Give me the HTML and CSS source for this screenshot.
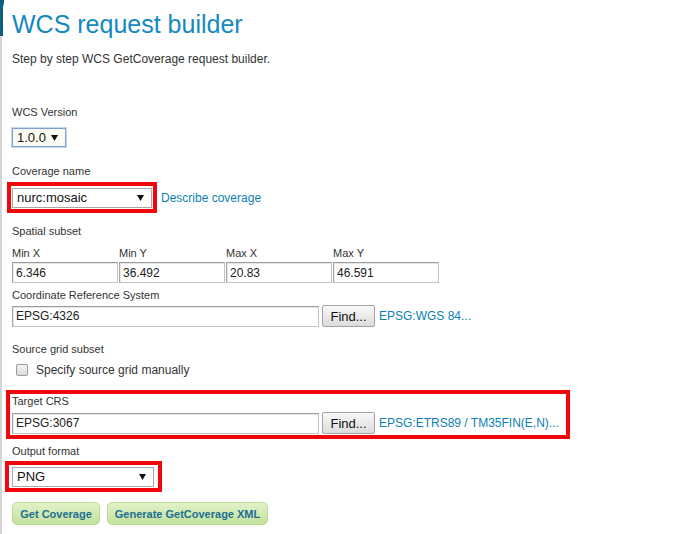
FILE: index.html
```html
<!DOCTYPE html>
<html lang="en">
<head>
<meta charset="utf-8">
<title>WCS request builder</title>
<link rel="stylesheet" href="styles.css">
</head>
<body>
<div class="frame">
  <div class="panel">
    <h1 class="title">WCS request builder</h1>
    <p class="intro">Step by step WCS GetCoverage request builder.</p>

    <div class="builder">
      <span class="lbl lbl-version">WCS Version</span>
      <div class="select sel-version"><span class="sel-text">1.0.0</span><svg class="caret" width="7" height="6" viewBox="0 0 7 6"><path d="M0 0H7L3.5 6Z"/></svg></div>

      <span class="lbl lbl-cov">Coverage name</span>
      <div class="cov-row">
        <div class="mark mark-cov">
          <div class="select sel-cov"><span class="sel-text">nurc:mosaic</span><svg class="caret" width="7" height="6" viewBox="0 0 7 6"><path d="M0 0H7L3.5 6Z"/></svg></div>
        </div>
        <a class="link link-cov" href="#">Describe coverage</a>
      </div>

      <span class="lbl lbl-spatial">Spatial subset</span>
      <div class="bbox">
        <span class="lbl">Min X</span>
        <span class="lbl">Min Y</span>
        <span class="lbl">Max X</span>
        <span class="lbl">Max Y</span>
        <input class="txt" type="text" value="6.346">
        <input class="txt" type="text" value="36.492">
        <input class="txt" type="text" value="20.83">
        <input class="txt" type="text" value="46.591">
      </div>

      <span class="lbl lbl-crs">Coordinate Reference System</span>
      <div class="crs-row">
        <input class="txt txt-crs" type="text" value="EPSG:4326">
        <button class="find" type="button">Find...</button>
        <a class="link link-crs" href="#">EPSG:WGS 84...</a>
      </div>

      <span class="lbl lbl-source">Source grid subset</span>
      <div class="check-row">
        <span class="check"></span>
        <span class="check-text">Specify source grid manually</span>
      </div>

      <div class="mark mark-target">
        <span class="lbl lbl-target">Target CRS</span>
        <div class="crs-row crs-row-target">
          <input class="txt txt-crs" type="text" value="EPSG:3067">
          <button class="find" type="button">Find...</button>
          <a class="link link-crs" href="#">EPSG:ETRS89 / TM35FIN(E,N)...</a>
        </div>
      </div>

      <span class="lbl lbl-out">Output format</span>
      <div class="mark mark-out">
        <div class="select sel-out"><span class="sel-text">PNG</span><svg class="caret" width="7" height="6" viewBox="0 0 7 6"><path d="M0 0H7L3.5 6Z"/></svg></div>
      </div>

      <div class="actions">
        <button class="action action-get" type="button">Get Coverage</button>
        <button class="action action-xml" type="button">Generate GetCoverage XML</button>
      </div>
    </div>
  </div>
</div>
</body>
</html>
```
FILE: styles.css
```css
* { box-sizing: border-box; }

body {
  margin: 0;
  font-family: "Liberation Sans", Arial, sans-serif;
  color: #333;
  background: #fff;
}

.frame {
  display: flex;
  min-height: 534px;
  background:
    linear-gradient(#0d5f7a, #0d5f7a) 0 0 / 4px 36px no-repeat,
    linear-gradient(#d4d4d4, #d4d4d4) 0 0 / 2px 100% no-repeat;
}

.panel {
  flex: 1;
  margin-left: 3px;
  background: #fff;
  border-top-left-radius: 7px;
  padding: 9px 0 0 9px;
}

.title {
  margin: 0;
  font-size: 25px;
  line-height: 30px;
  font-weight: normal;
  color: #1589c0;
}

.intro {
  margin: 13px 0 0;
  font-size: 12px;
  line-height: 14px;
  color: #333;
}

.builder {
  display: flex;
  flex-direction: column;
  align-items: flex-start;
}

.lbl {
  display: block;
  font-size: 11px;
  line-height: 13px;
  color: #333;
}

.lbl-version { margin-top: 40px; }
.lbl-cov { margin-top: 18px; }
.lbl-spatial { margin-top: 12px; }
.lbl-crs { margin-top: 6px; }
.lbl-source { margin-top: 16px; }
.lbl-out { margin-top: 6px; }

/* select-like boxes */
.select {
  display: flex;
  align-items: center;
  justify-content: space-between;
  height: 20px;
  border: 1px solid #a9a9a9;
  background: #fff;
  padding: 0 7px 0 4px;
  font-size: 13px;
  color: #111;
}
.sel-text { line-height: 16px; }
.caret { fill: #111; flex: none; }

.sel-version {
  margin-top: 9px;
  width: 54px;
  height: 19px;
  border-color: #7d9fd6;
  background: #fbfbf2;
  box-shadow: 0 0 0 1px #c5d6f0;
}

.sel-cov { width: 140px; }
.sel-out { width: 142px; }

/* red annotation frames */
.mark {
  border: 4px solid #f2060c;
}

.cov-row {
  display: flex;
  align-items: center;
  margin-top: 4px;
  margin-left: -5px;
}
.mark-cov {
  width: 150px;
  padding: 2px 0 1px 1px;
}
.link-cov { margin-left: 4px; }

.link {
  font-size: 12px;
  color: #0c7fb2;
  text-decoration: none;
}

/* bounding box grid */
.bbox {
  margin-top: 9px;
  display: grid;
  grid-template-columns: repeat(4, 106px);
  column-gap: 1px;
  row-gap: 2px;
}

.txt {
  height: 21px;
  margin: 0;
  padding: 0 3px;
  border: 1px solid #c4c4c4;
  border-top-color: #9c9c9c;
  border-left-color: #a8a8a8;
  box-shadow: inset 1px 1px 0 #e6e6e6;
  font-family: "Liberation Sans", Arial, sans-serif;
  font-size: 12px;
  color: #222;
  background: #fff;
  outline: none;
}

.crs-row {
  display: flex;
  align-items: center;
  margin-top: 3px;
}
.txt-crs { width: 307px; }

.find {
  margin: 0 0 0 3px;
  width: 53px;
  height: 22px;
  padding: 0;
  border: 1px solid #a3a3a3;
  border-radius: 2px;
  background: linear-gradient(#f8f8f8, #dcdcdc);
  font-family: "Liberation Sans", Arial, sans-serif;
  font-size: 13px;
  color: #111;
}
.link-crs { margin-left: 4px; }

/* checkbox */
.check-row {
  display: flex;
  align-items: center;
  margin-top: 6px;
  height: 16px;
  padding-left: 4px;
}
.check {
  width: 12px;
  height: 12px;
  border: 1px solid #9a9a9a;
  border-radius: 2px;
  background: linear-gradient(#f4f4f4, #dcdcdc);
}
.check-text {
  margin-left: 8px;
  font-size: 12px;
  color: #333;
}

/* target CRS frame */
.mark-target {
  margin-top: 12px;
  margin-left: -6px;
  width: 564px;
  padding: 1px 0 1px 2px;
}
.crs-row-target { margin-top: 4px; }

/* output format frame */
.mark-out {
  margin-top: 3px;
  margin-left: -7px;
  width: 157px;
  padding: 2px 0 1px 3px;
}

/* action buttons */
.actions {
  display: flex;
  gap: 7px;
  margin-top: 10px;
}
.action {
  margin: 0;
  height: 23px;
  padding: 0;
  border: 1px solid #bcdc96;
  border-radius: 5px;
  background: linear-gradient(#e3f2c9, #c2e09c);
  font-family: "Liberation Sans", Arial, sans-serif;
  font-size: 11px;
  font-weight: bold;
  color: #1b6f92;
}
.action-get { width: 88px; }
.action-xml { width: 161px; }
```
